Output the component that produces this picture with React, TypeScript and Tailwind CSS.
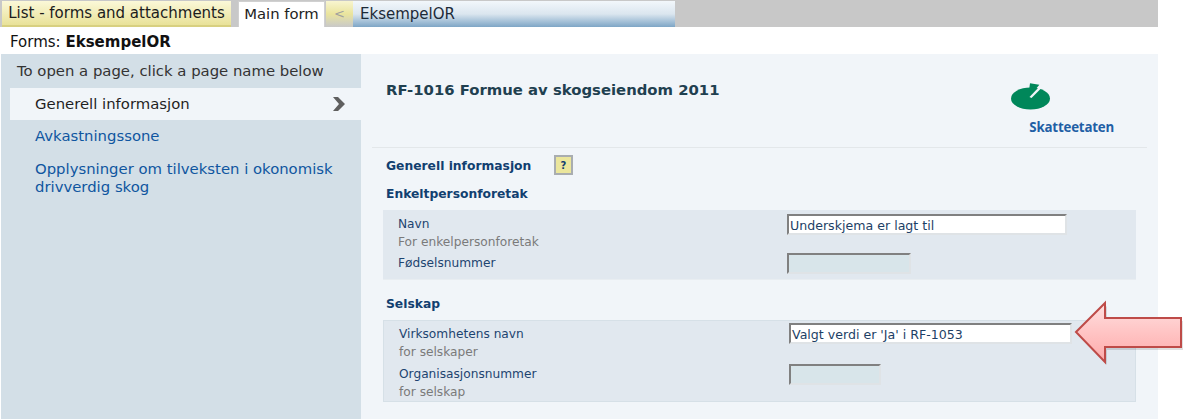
const font = "font-['DejaVu_Sans',Verdana,sans-serif]";

function Field({
  label,
  hint,
  width,
  value,
  readOnly,
  className,
  labelClass,
}: {
  label: string;
  hint?: string;
  width: string;
  value?: string;
  readOnly?: boolean;
  className?: string;
  labelClass?: string;
}) {
  return (
    <div className={`flex ${className ?? ""}`}>
      <div className={`w-[404px] pl-[15px] text-[12.2px] leading-[18px] ${labelClass ?? ""}`}>
        <div className="text-[#1d4470]">{label}</div>
        {hint && <div className="text-[#7a7a7a]">{hint}</div>}
      </div>
      <div
        className={`h-[21px] border-2 border-t-[#808080] border-l-[#808080] border-r-[#dfe3e6] border-b-[#dfe3e6] px-[1px] text-[12.6px] leading-[19px] text-[#1d3f66] ${width} ${
          readOnly ? "bg-[#d8e5ea]" : "bg-white"
        }`}
      >
        {value}
      </div>
    </div>
  );
}

export default function App() {
  return (
    <div className={`relative h-[419px] w-[1190px] overflow-hidden bg-white ${font}`}>
      {/* tabs */}
      <div className="flex h-[27px] w-[1158px] items-end bg-[#c8c8c8] pl-[2px]">
        <div className="flex h-[26px] w-[229px] items-center justify-center border-b-2 border-[#d8d080] bg-gradient-to-b from-[#fbf8d8] to-[#e9e299] text-[15px] text-[#1c1c1c]">
          List - forms and attachments
        </div>
        <div className="ml-[7px] flex h-[26px] w-[87px] items-center justify-center border-x border-t border-[#d0d0d0] bg-white text-[14.8px] text-[#222]">
          Main form
        </div>
        <div className="ml-[1px] flex h-[26px] w-[27px] items-center justify-center bg-gradient-to-b from-[#f8f5d0] via-[#eae49c] to-[#c8c8c8] text-[13px] text-[#a0a0a0]">
          &lt;
        </div>
        <div className="flex h-[26px] w-[322px] items-center bg-gradient-to-b from-[#f2f7fb] via-[#dbe6ef] to-[#7ea6c6] pl-[7px] text-[15px] text-[#1c2a38]">
          EksempelOR
        </div>
      </div>

      <div className="flex h-[27px] items-center pl-[10px] pt-[3px] text-[15px] text-[#111]">
        Forms:&nbsp;<b>EksempelOR</b>
      </div>

      <div className="flex h-[365px] w-[1158px] pl-[1px]">
        {/* side menu */}
        <div className="w-[360px] bg-[#d3dfe7] pl-[9px] text-[14.85px] leading-[18px]">
          <div className="flex h-[34px] items-center pl-[7px] text-[#333]">
            To open a page, click a page name below
          </div>
          <div className="flex h-[32px] items-center justify-between bg-[#f1f5f9] pl-[25px] pr-[15px] text-[#1f1f1f]">
            Generell informasjon
            <svg width="14" height="14" viewBox="0 0 14 14">
              <path d="M1 0h5l7 7-7 7H1l6-7z" fill="#5f5f5f" />
            </svg>
          </div>
          <div className="pl-[25px] pt-[7px] text-[#0f56a0]">Avkastningssone</div>
          <div className="w-[335px] pl-[25px] pt-[15px] text-[#0f56a0]">
            Opplysninger om tilveksten i okonomisk drivverdig skog
          </div>
        </div>

        {/* form */}
        <div className="flex-1 bg-[#f1f5f9] pl-[11px]">
          <div className="flex h-[94px] w-[775px] justify-between border-b border-[#e3e7ea]">
            <h1 className="pl-[14px] pt-[27px] text-[14.85px] font-bold leading-[18px] text-[#1f4050]">
              RF-1016 Formue av skogseiendom 2011
            </h1>
            <div className="mr-[33px] flex flex-col items-end pt-[29px]">
              <svg width="40" height="28" viewBox="0 0 40 28" className="mr-[63px]">
                <ellipse cx="19.5" cy="15.5" rx="19.5" ry="11" fill="#00875a" />
                <path d="M19 0.3L28.3 1.7L20 12L18 8z" fill="#00875a" />
                <path d="M28.5 3.5L31 4.5L20.5 15L18.5 14z" fill="#f1f5f9" />
              </svg>
              <div className="mt-[8px] font-['Open_Sans',sans-serif] text-[13.3px] font-bold leading-[16px] tracking-[-0.2px] text-[#1f5fa5]">
                Skatteetaten
              </div>
            </div>
          </div>

          <div className="mt-[7px] flex h-[20px] items-center pl-[14px] text-[12.3px] font-bold text-[#123f70]">
            <span className="w-[168px] pt-[3px]">Generell informasjon</span>
            <span className="flex h-[20px] w-[19px] items-center justify-center border-2 border-[#a9adb0] bg-[#ebe69c] text-[10px] text-[#123f70]">
              ?
            </span>
          </div>
          <div className="mt-[10px] pl-[14px] text-[12.3px] font-bold leading-[18px] text-[#123f70]">
            Enkeltpersonforetak
          </div>

          <div className="ml-[11px] mt-[7px] h-[70px] w-[753px] border-b border-[#e8edf1] bg-[#e1e8ef] pt-[4px]">
            <Field
              label="Navn"
              hint="For enkelpersonforetak"
              width="w-[280px]"
              value="Underskjema er lagt til"
              className="h-[39px]"
              labelClass="pt-[1px]"
            />
            <Field label="Fødselsnummer" width="w-[124px]" readOnly labelClass="pt-[1px]" />
          </div>

          <div className="mt-[15px] pl-[14px] text-[12.3px] font-bold leading-[18px] text-[#123f70]">
            Selskap
          </div>

          <div className="ml-[11px] mt-[7px] h-[82px] w-[753px] border border-[#d6e0e7] bg-[#e1e8ef] pt-[2px]">
            <Field
              label="Virksomhetens navn"
              hint="for selskaper"
              width="ml-[1px] w-[283px]"
              value="Valgt verdi er 'Ja' i RF-1053"
              className="h-[41px]"
              labelClass="pt-[2px]"
            />
            <Field
              label="Organisasjonsnummer"
              hint="for selskap"
              width="ml-[1px] w-[92px]"
              readOnly
              labelClass="pt-[1px]"
            />
          </div>
        </div>
      </div>

      {/* red callout arrow */}
      <svg
        className="absolute left-[1072px] top-[298px]"
        width="116"
        height="70"
        viewBox="0 0 116 70"
      >
        <defs>
          <linearGradient id="arrow" x1="0" y1="0" x2="0" y2="1">
            <stop offset="0" stopColor="#ffe0e0" />
            <stop offset="0.5" stopColor="#ffc4c4" />
            <stop offset="1" stopColor="#fdaaaa" />
          </linearGradient>
        </defs>
        <path
          d="M5 35L34 6v15h76v29H34v15z"
          transform="translate(1 2)"
          fill="#000"
          opacity="0.12"
        />
        <path
          d="M4 34L33 5v15h76v29H33v15z"
          fill="url(#arrow)"
          stroke="#be4b48"
          strokeWidth="2"
          strokeLinejoin="miter"
        />
      </svg>
    </div>
  );
}
